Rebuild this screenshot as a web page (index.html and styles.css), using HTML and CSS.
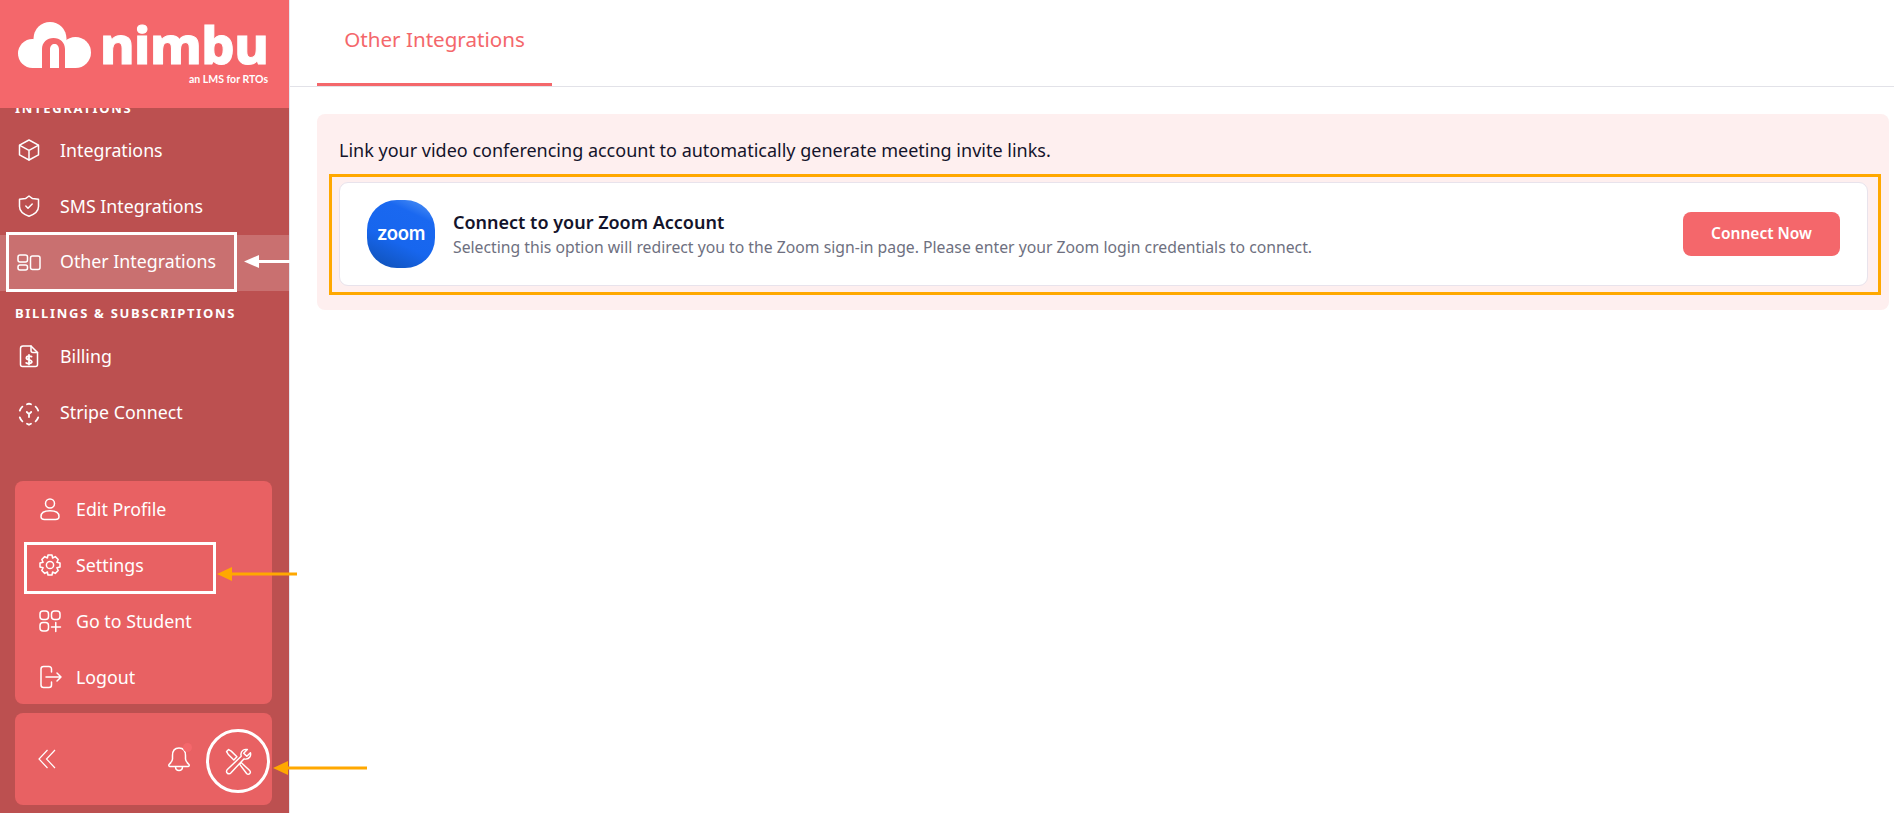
FILE: index.html
```html
<!DOCTYPE html>
<html lang="en">
<head>
    <meta charset="UTF-8">
    <meta name="viewport" content="width=device-width, initial-scale=1.0">
    <title>Other Integrations</title>
    <link rel="stylesheet" href="styles.css">
</head>
<body>
    <div class="sidebar">
        <div class="brand">
            <svg class="cloud" viewBox="0 0 73 46" fill="#fff">
                <circle cx="14.5" cy="31.5" r="14.5"/>
                <circle cx="32" cy="16.5" r="16.5"/>
                <circle cx="57.5" cy="30.5" r="15.5"/>
                <path d="M14 22H58V46H14Z"/>
                <path d="M24 46V27C24 20.5 29 16 35.5 16C42 16 47 20.5 47 27V46H41V27.5C41 24 39 22 36.5 22C34 22 32 24 32 27.5V46Z" fill="#f4676b"/>
            </svg>
            <div class="brand-text">
                <div class="brand-name">nimbu</div>
                <div class="brand-tag">an LMS for RTOs</div>
            </div>
        </div>

        <div class="nav">
            <div class="nav-title first">INTEGRATIONS</div>
            <div class="nav-item">
                <svg class="icon" viewBox="0 0 24 24"><path d="M12 2 21.5 7.2V16.8L12 22 2.5 16.8V7.2Z"/><path d="M2.8 7.4 12 12.4 21.2 7.4M12 12.4V22"/></svg>
                Integrations
            </div>
            <div class="nav-item">
                <svg class="icon" viewBox="0 0 24 24"><path d="M12 2 15.5 4.6 21.5 5.2V12.5C21.5 17.5 17 20.5 12 22.2 7 20.5 2.5 17.5 2.5 12.5V5.2L8.5 4.6Z"/><path d="M8.8 12 11 14.2 15.2 10"/></svg>
                SMS Integrations
            </div>
            <div class="nav-item active">
                <svg class="icon" viewBox="0 0 24 24"><rect x="1" y="6" width="9.5" height="7" rx="2"/><rect x="1" y="16" width="9.5" height="5" rx="2"/><rect x="13.5" y="7" width="9.5" height="13.5" rx="2"/></svg>
                Other Integrations
            </div>
            <div class="nav-title">BILLINGS &amp; SUBSCRIPTIONS</div>
            <div class="nav-item">
                <svg class="icon" viewBox="0 0 24 24"><path d="M6 2H14L20.5 8.5V20.5C20.5 21.6 19.6 22.5 18.5 22.5H5.5C4.4 22.5 3.5 21.6 3.5 20.5V4.5C3.5 3.1 4.6 2 6 2Z"/><path d="M14 2V6.5C14 7.6 14.9 8.5 16 8.5H20.5"/><path class="thick" d="M14.6 12.6C13.8 11.8 9.4 11.6 9.4 13.9C9.4 16.3 14.8 15.4 14.8 17.8C14.8 20 10.2 19.8 9.2 18.9M12 10.8V20.6"/></svg>
                Billing
            </div>
            <div class="nav-item">
                <svg class="icon stripe-icon" viewBox="0 0 24 24"><path class="thick" d="M10 2.3Q12 1.2 14 2.3M18.6 4.6C19.8 5.6 20.6 6.8 21.2 8.6M21.2 15.4C20.6 17.2 19.8 18.4 18.6 19.4M5.4 4.6C4.2 5.6 3.4 6.8 2.8 8.6M2.8 15.4C3.4 17.2 4.2 18.4 5.4 19.4M10 21.7 12 22.8 14 21.7M9.8 10 12 12.2 14.2 10M12 12.2V15"/></svg>
                Stripe Connect
            </div>
        </div>

        <div class="panel-menu">
            <div class="menu-item">
                <svg class="icon" viewBox="0 0 24 24"><circle cx="12" cy="6.5" r="4.5"/><path d="M3 19.5C3 15.5 7 13.8 12 13.8S21 15.5 21 19.5C21 21.5 19.5 22.5 17.5 22.5H6.5C4.5 22.5 3 21.5 3 19.5Z"/></svg>
                Edit Profile
            </div>
            <div class="menu-item">
                <svg class="icon" viewBox="0 0 24 24"><circle cx="12" cy="12" r="3.6"/><path d="M10 2H14L14.6 5 17.3 3.6 20.2 6.5 18.9 9.3 22 10V14L18.9 14.7 20.2 17.5 17.3 20.4 14.6 19 14 22H10L9.4 19 6.7 20.4 3.8 17.5 5.1 14.7 2 14V10L5.1 9.3 3.8 6.5 6.7 3.6 9.4 5Z"/></svg>
                Settings
            </div>
            <div class="menu-item">
                <svg class="icon" viewBox="0 0 24 24"><rect x="2" y="2" width="8.5" height="8.5" rx="3"/><rect x="13.5" y="2" width="8.5" height="8.5" rx="3"/><rect x="2" y="13.5" width="8.5" height="8.5" rx="3"/><path d="M17.75 13.5V22.5M13.5 18H22.5"/></svg>
                Go to Student
            </div>
            <div class="menu-item">
                <svg class="icon" viewBox="0 0 24 24"><path d="M13.5 7V4C13.5 2.7 12.5 1.5 11 1.5H5.5C4 1.5 3 2.7 3 4V20C3 21.3 4 22.5 5.5 22.5H11C12.5 22.5 13.5 21.3 13.5 20V17"/><path d="M8 12H23M19 8 23 12 19 16"/></svg>
                Logout
            </div>
        </div>

        <div class="panel-tools">
            <svg class="chevrons" viewBox="0 0 18 20"><path d="M9.5 1 1 10 9.5 19M17 1 8.5 10 17 19"/></svg>
            <div class="bell">
                <svg class="bell-icon" viewBox="0 0 24 26"><path d="M12 2C7.5 2 5.5 5.5 5.5 9.5V13C5.5 15.5 3.5 17 2 18.5C1.5 19.5 2 20.5 3 20.5H21C22 20.5 22.5 19.5 22 18.5C20.5 17 18.5 15.5 18.5 13V9.5C18.5 5.5 16.5 2 12 2Z"/><path d="M8.5 20.5C8.5 23 10 24.5 12 24.5S15.5 23 15.5 20.5"/></svg>
                <span class="bell-dot"></span>
            </div>
            <div class="tools-btn">
                <svg class="tools-icon" viewBox="0 0 26 26"><path d="M1.5 3.5 3.5 1.5 6 3 11.5 8.5 8.5 11.5 3 6Z"/><path d="M14 15.5 15.5 14 23.5 21.5C25 23 24.5 24 23.7 24.7 23 25.4 21.8 25.6 20.8 24.5Z"/><path d="M24.5 4.5 21 8 18 5 21.5 1.5C18.5.8 15.5 2.5 15.3 6L15.6 8 2.5 20.5C1 22 1.3 23.5 2.2 24.2 3.2 25.2 4.6 25 5.8 23.8L18.2 10.5 20 10.7C23.5 10.5 25.3 7.5 24.5 4.5Z"/></svg>
            </div>
        </div>
    </div>

    <div class="main">
        <div class="tabs">
            <div class="tab">Other Integrations</div>
        </div>
        <div class="panel">
            <p class="panel-text">Link your video conferencing account to automatically generate meeting invite links.</p>
            <div class="zoom-card">
                <div class="zoom-logo">zoom</div>
                <div class="zoom-info">
                    <div class="zoom-title">Connect to your Zoom Account</div>
                    <div class="zoom-desc">Selecting this option will redirect you to the Zoom sign-in page. Please enter your Zoom login credentials to connect.</div>
                </div>
                <button class="connect-btn">Connect Now</button>
            </div>
        </div>
    </div>

    <!-- annotations drawn on top of the screenshot -->
    <div class="mark mark-other"></div>
    <div class="mark mark-settings"></div>
    <div class="mark mark-card"></div>
    <svg class="arrow arrow-other" viewBox="0 0 46 14"><path d="M46 6H12V9H46Z" fill="#fff"/><path d="M0 7.5 15 1V14Z" fill="#fff"/></svg>
    <svg class="arrow arrow-settings" viewBox="0 0 80 14"><path d="M80 5.5H12V8.5H80Z" fill="#ffa800"/><path d="M0 7 15 0V14Z" fill="#ffa800"/></svg>
    <svg class="arrow arrow-tools" viewBox="0 0 94 14"><path d="M94 5.5H12V8.5H94Z" fill="#ffa800"/><path d="M0 7 15 0V14Z" fill="#ffa800"/></svg>
</body>
</html>
```

FILE: styles.css
```css
* {
    margin: 0;
    padding: 0;
    box-sizing: border-box;
    font-family: "Noto Sans", sans-serif;
}
body {
    display: flex;
    height: 100vh;
    overflow: hidden;
    background: #fff;
}

/* sidebar */
.sidebar {
    display: flex;
    flex-direction: column;
    width: 290px;
    flex-shrink: 0;
    padding-bottom: 8px;
    background: #bc5050;
    border-right: 1px solid #e6e6ee;
    color: #fff;
}
.brand {
    display: flex;
    align-items: flex-start;
    height: 108px;
    padding: 22px 0 0 18px;
    background: #f4676b;
}
.cloud {
    width: 73px;
    height: 46px;
}
.brand-text {
    margin-left: 9px;
    width: 168px;
    text-align: right;
}
.brand-name {
    margin-top: -4px;
    font-size: 52.5px;
    font-weight: 800;
    line-height: 52px;
    letter-spacing: -0.5px;
    -webkit-text-stroke: 1px #fff;
}
.brand-tag {
    margin-top: 2px;
    font-family: Lato, sans-serif;
    font-size: 10.5px;
    font-weight: 700;
    line-height: 14px;
}
.nav {
    flex: 1;
    overflow: hidden;
}
.nav-title {
    height: 16px;
    margin: 14px 0 8px 15px;
    font-size: 13px;
    font-weight: 700;
    line-height: 16px;
    letter-spacing: 1.7px;
}
.nav-title.first {
    margin-top: -8px;
    margin-bottom: 7px;
}
.nav-item {
    display: flex;
    align-items: center;
    gap: 19px;
    height: 56px;
    padding: 0 0 2px 17px;
    font-size: 17.8px;
}
.nav-item.active {
    background: #c97070;
    padding-bottom: 4px;
}
.icon {
    width: 24px;
    height: 24px;
    flex-shrink: 0;
    fill: none;
    stroke: #fff;
    stroke-width: 1.5;
    stroke-linecap: round;
    stroke-linejoin: round;
}
.icon .thick {
    stroke-width: 1.8;
}
.stripe-icon {
    margin-top: 3px;
}

/* cards at the bottom of the sidebar */
.panel-menu, .panel-tools {
    margin: 0 17px 0 15px;
    background: #e86163;
    border-radius: 8px;
}
.panel-menu {
    height: 223px;
    margin-bottom: 9px;
}
.menu-item {
    display: flex;
    align-items: center;
    gap: 14px;
    height: 56px;
    padding: 0 0 1px 23px;
    font-size: 17.8px;
}
.panel-tools {
    display: flex;
    align-items: center;
    height: 92px;
    padding-left: 23px;
}
.chevrons {
    width: 18px;
    height: 20px;
    fill: none;
    stroke: #fff;
    stroke-width: 1.2;
}
.bell {
    position: relative;
    margin-left: 111px;
    height: 26px;
}
.bell-icon {
    width: 24px;
    height: 26px;
    fill: none;
    stroke: #fff;
    stroke-width: 1.5;
    stroke-linejoin: round;
}
.bell-dot {
    position: absolute;
    top: -3px;
    right: -1px;
    width: 9px;
    height: 9px;
    background: #f4676b;
    border-radius: 50%;
}
.tools-btn {
    display: flex;
    align-items: center;
    justify-content: center;
    width: 64px;
    height: 64px;
    margin: 4px 0 0 15px;
    border: 3px solid #fff;
    border-radius: 50%;
}
.tools-icon {
    width: 27px;
    height: 27px;
    fill: none;
    stroke: #fff;
    stroke-width: 1.4;
    stroke-linejoin: round;
}

/* main area */
.main {
    flex: 1;
    min-width: 0;
}
.tabs {
    height: 87px;
    padding-left: 27px;
    border-bottom: 1px solid #e2e2e8;
}
.tab {
    width: 235px;
    height: 86px;
    padding-top: 25px;
    font-size: 20.6px;
    line-height: 28px;
    text-align: center;
    color: #f4676b;
    border-bottom: 3px solid #f4676b;
}
.panel {
    margin: 27px 5px 0 27px;
    padding: 24px 21px 24px 22px;
    background: #feefef;
    border-radius: 8px;
}
.panel-text {
    margin-bottom: 20px;
    font-size: 18px;
    line-height: 24px;
    color: #14142b;
}
.zoom-card {
    display: flex;
    align-items: center;
    height: 104px;
    padding: 0 27px;
    background: #fff;
    border: 1px solid #e8e3ec;
    border-radius: 9px;
}
.zoom-logo {
    display: flex;
    align-items: center;
    justify-content: center;
    width: 68px;
    height: 68px;
    flex-shrink: 0;
    padding-bottom: 2px;
    font-family: Inter, sans-serif;
    font-size: 18.5px;
    font-weight: 600;
    letter-spacing: -0.3px;
    color: #fff;
    background: linear-gradient(205deg, #5a9af5 0%, #1a68f0 24%, #1766ee 60%, #0f4fb0 100%);
    border-radius: 44%;
}
.zoom-info {
    flex: 1;
    margin: 0 0 2px 18px;
}
.zoom-title {
    font-size: 18px;
    font-weight: 600;
    line-height: 27px;
    color: #14142b;
}
.zoom-desc {
    font-size: 15.75px;
    line-height: 22px;
    color: #6e7080;
}
.connect-btn {
    width: 157px;
    height: 44px;
    padding-bottom: 2px;
    border: none;
    border-radius: 8px;
    font-size: 15.5px;
    font-weight: 600;
    color: #fff;
    background: #f4676b;
    cursor: pointer;
}

/* annotations */
.mark, .arrow {
    position: absolute;
}
.mark {
    border: 3px solid #fff;
}
.mark-other {
    left: 6px;
    top: 232px;
    width: 231px;
    height: 60px;
}
.mark-settings {
    left: 24px;
    top: 542px;
    width: 192px;
    height: 52px;
}
.mark-card {
    left: 329px;
    top: 174px;
    width: 1552px;
    height: 121px;
    border-color: #ffa800;
}
.arrow-other {
    left: 244px;
    top: 254px;
    width: 46px;
    height: 14px;
}
.arrow-settings {
    left: 217px;
    top: 567px;
    width: 80px;
    height: 14px;
}
.arrow-tools {
    left: 273px;
    top: 761px;
    width: 94px;
    height: 14px;
}
```
